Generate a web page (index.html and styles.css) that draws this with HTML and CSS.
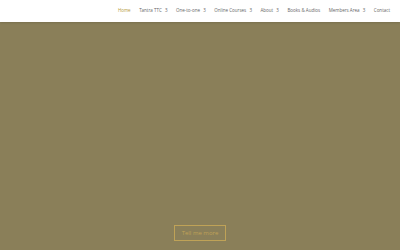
FILE: index.html
```html
<!DOCTYPE html>
<html lang="en">
	<head>
		<meta charset="UTF-8">
		<title>Home</title>
		<link rel="stylesheet" href="styles.css">
	</head>
	<body>
		<header class="top">
			<ul class="menu">
				<li class="current">Home</li>
				<li>Tantra TTC <span class="arr">3</span></li>
				<li>One-to-one <span class="arr">3</span></li>
				<li>Online Courses <span class="arr">3</span></li>
				<li>About <span class="arr">3</span></li>
				<li>Books &amp; Audios</li>
				<li>Members Area <span class="arr">3</span></li>
				<li>Contact</li>
			</ul>
		</header>
		<section class="hero">
			<a class="more" href="#">Tell me more</a>
		</section>
	</body>
</html>
```

FILE: styles.css
```css
* {
	margin: 0;
	padding: 0;
	list-style: none;
}

body {
	font-family: "Open Sans", "Liberation Sans", sans-serif;
	background: #8a7f59;
}

.top {
	height: 22px;
	background: #fff;
	display: flex;
	justify-content: flex-end;
	align-items: center;
	padding-right: 10px;
	box-shadow: 0 1px 2px rgba(0, 0, 0, 0.12);
	position: relative;
	z-index: 2;
}

.menu {
	display: flex;
	gap: 8.5px;
	font-size: 4.5px;
	color: #666;
	margin-top: -3px;
	white-space: nowrap;
}

.menu .current {
	color: #b59a3d;
}

.arr {
	margin-left: 2px;
}

.hero {
	height: 228px;
	display: flex;
	justify-content: center;
	align-items: flex-end;
	padding-bottom: 9px;
	box-sizing: border-box;
}

.more {
	display: block;
	border: 1px solid #bfa257;
	color: #bfa257;
	font-size: 6px;
	text-decoration: none;
	padding: 4px 0;
	width: 52px;
	height: 16px;
	box-sizing: border-box;
	text-align: center;
	white-space: nowrap;
	line-height: 6px;
}
```
